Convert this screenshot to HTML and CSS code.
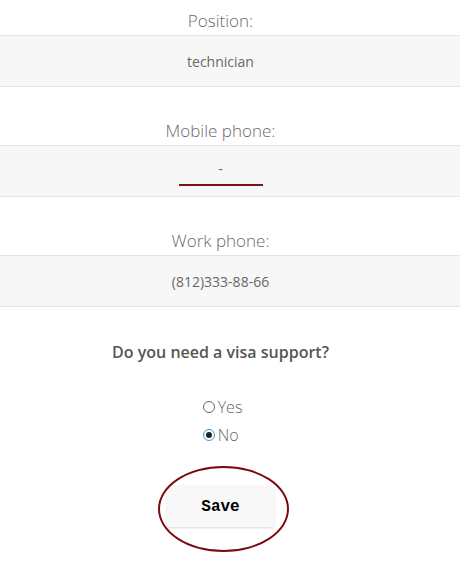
FILE: index.html
```html
<!DOCTYPE html>
<html>
<head>
<meta charset="utf-8">
<link rel="stylesheet" href="styles.css">
</head>
<body>
<div class="form">
  <div class="field">
    <div class="label">Position:</div>
    <div class="band"><div class="value">technician</div></div>
  </div>
  <div class="field">
    <div class="label">Mobile phone:</div>
    <div class="band"><div class="value"><span class="mobile">-</span></div></div>
  </div>
  <div class="field">
    <div class="label">Work phone:</div>
    <div class="band"><div class="value">(812)333-88-66</div></div>
  </div>
  <div class="question">Do you need a visa support?</div>
  <div class="radios">
    <div class="radio-list">
      <label class="radio"><span class="circle"></span>Yes</label>
      <label class="radio"><span class="circle checked"></span>No</label>
    </div>
  </div>
  <div class="actions">
    <div class="save-wrap">
      <div class="save">Save</div>
      <span class="ring"></span>
    </div>
  </div>
</div>
</body>
</html>
```
FILE: styles.css
```css
html, body {
  margin: 0;
  padding: 0;
  background: #fff;
}
body {
  font-family: "Open Sans", "Noto Sans", sans-serif;
  color: #555;
  min-height: 562px;
}
.form {
  padding-top: 9px;
  padding-bottom: 40px;
}
.field {
  margin-bottom: 32px;
}
.label {
  height: 24px;
  line-height: 24px;
  font-size: 17px;
  font-weight: 300;
  color: #6a6a6a;
  text-align: center;
  padding-right: 19px;
  margin-bottom: 2px;
}
.band {
  background: #f7f7f7;
  border-top: 1px solid #e3e3e3;
  border-bottom: 1px solid #e3e3e3;
  height: 50px;
}
.value {
  padding-right: 19px;
  text-align: center;
  line-height: 52px;
  font-size: 14px;
  color: #686868;
}
.mobile {
  display: inline-block;
  width: 84px;
  height: 26px;
  line-height: 22px;
  border-bottom: 2px solid #7f1313;
  vertical-align: top;
  margin-top: 12px;
}
.question {
  text-align: center;
  padding-right: 19px;
  font-size: 16px;
  font-weight: 600;
  color: #555;
  line-height: 24px;
  margin-top: 33px;
}
.radios {
  text-align: center;
  padding-right: 15px;
  margin-top: 29px;
}
.radio-list {
  display: inline-block;
  text-align: left;
}
.radio {
  display: flex;
  align-items: center;
  height: 28px;
  font-size: 16px;
  font-weight: 300;
  color: #666;
}
.circle {
  width: 10px;
  height: 10px;
  border: 1px solid #666;
  border-radius: 50%;
  margin-right: 3px;
  box-sizing: content-box;
  position: relative;
}
.circle.checked {
  border-color: #3a9ad9;
}
.circle.checked::after {
  content: "";
  position: absolute;
  left: 2px;
  top: 2px;
  width: 6px;
  height: 6px;
  border-radius: 50%;
  background: #222;
}
.actions {
  text-align: center;
  padding-right: 19px;
  margin-top: 36px;
}
.save-wrap {
  display: inline-block;
  position: relative;
  vertical-align: top;
}
.save {
  width: 107px;
  height: 42px;
  line-height: 44px;
  text-align: center;
  background: #f8f8f8;
  box-shadow: 0 1px 2px rgba(0,0,0,0.15);
  font-family: "Liberation Mono", "Courier New", monospace;
  font-weight: bold;
  font-size: 16px;
  color: #000;
}
.ring {
  position: absolute;
  left: -9px;
  top: -19px;
  width: 127px;
  height: 82px;
  border: 2px solid #7a0b0b;
  border-radius: 50%;
}
```
